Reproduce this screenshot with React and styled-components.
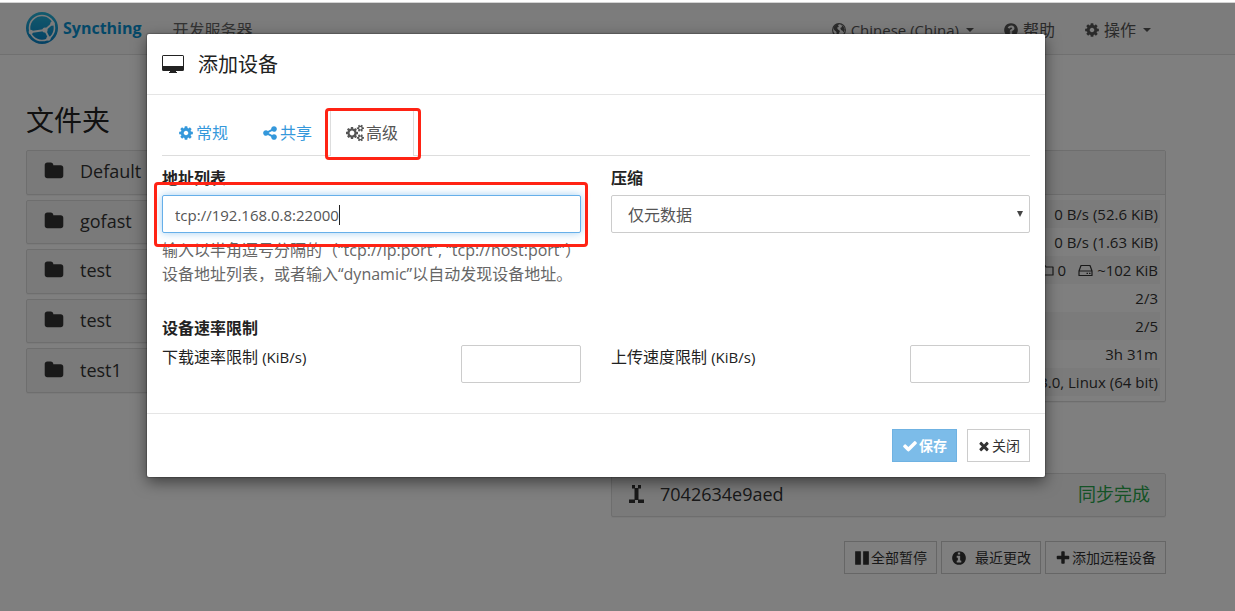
import React, { useState } from 'react';
import styled, { createGlobalStyle, css } from 'styled-components';

const GlobalStyle = createGlobalStyle`
  *, *::before, *::after {
    box-sizing: border-box;
  }

  body {
    margin: 0;
    background: #fff;
    color: #333;
    font-family: "Open Sans", "Noto Sans CJK SC", sans-serif;
    font-size: 15px;
    line-height: 24px;
    overflow-x: hidden;
  }

  button, input, select {
    font: inherit;
  }
`

const PATHS = {
  cog: 'M1152 896q0-106-75-181t-181-75-181 75-75 181 75 181 181 75 181-75 75-181zm512-109v222q0 12-8 23t-20 13l-185 28q-19 54-39 91 35 50 107 138 10 12 10 25t-9 23q-27 37-99 108t-94 71q-12 0-26-9l-138-108q-44 23-91 38-16 136-29 186-7 28-36 28h-222q-14 0-24.5-8.5t-11.5-21.5l-28-184q-49-16-90-37l-141 107q-10 9-25 9-14 0-25-11-126-114-165-168-7-10-7-23 0-12 8-23 15-21 51-66.5t54-70.5q-27-50-41-99l-183-27q-13-2-21-12.5t-8-23.5v-222q0-12 8-23t19-13l186-28q14-46 39-92-40-57-107-138-10-12-10-24 0-10 9-23 26-36 98.5-107.5t94.5-71.5q13 0 26 10l138 107q44-23 91-38 16-136 29-186 7-28 36-28h222q14 0 24.5 8.5t11.5 21.5l28 184q49 16 90 37l142-107q9-9 24-9 13 0 25 10 129 119 165 170 7 8 7 22 0 12-8 23-15 21-51 66.5t-54 70.5q26 50 41 98l183 28q13 2 21 12.5t8 23.5z',
  share: 'M1344 1024q133 0 226.500 93.500t93.500 226.500-93.500 226.500-226.500 93.500-226.500-93.500-93.500-226.500q0-12 2-34l-360-180q-92 86-218 86-133 0-226.500-93.500t-93.500-226.500 93.500-226.500 226.500-93.500q126 0 218 86l360-180q-2-22-2-34 0-133 93.500-226.500t226.500-93.500 226.500 93.500 93.500 226.500-93.500 226.500-226.500 93.500q-126 0-218-86l-360 180q2 22 2 34t-2 34l360 180q92-86 218-86z',
  cogs: 'M896 896q0-106-75-181t-181-75-181 75-75 181 75 181 181 75 181-75 75-181zm768 512q0-52-38-90t-90-38-90 38-38 90q0 53 37.500 90.500t90.500 37.500 90.500-37.500 37.500-90.500zm0-1024q0-52-38-90t-90-38-90 38-38 90q0 53 37.500 90.500t90.500 37.500 90.500-37.500 37.500-90.500zm-384 421v185q0 10-7 19.500t-16 10.500l-155 24q-11 35-32 76 34 48 90 115 7 11 7 20 0 12-7 19-23 30-82.500 89.500t-78.500 59.500q-11 0-21-7l-115-90q-37 19-77 31-11 108-23 155-7 24-30 24h-186q-11 0-20-7.500t-10-17.500l-23-153q-34-10-75-31l-118 89q-7 7-20 7-11 0-21-8-144-133-144-160 0-9 7-19 10-14 41-53t47-61q-23-44-35-82l-152-24q-10-1-17-9.500t-7-19.500v-185q0-10 7-19.500t16-10.500l155-24q11-35 32-76-34-48-90-115-7-11-7-20 0-12 7-20 22-30 82-89t79-59q11 0 21 7l115 90q34-18 77-32 11-108 23-154 7-24 30-24h186q11 0 20 7.500t10 17.500l23 153q34 10 75 31l118-89q8-7 20-7 11 0 21 8 144 133 144 160 0 8-7 19-12 16-42 54t-45 60q23 48 34 82l152 23q10 2 17 10.500t7 19.500zm640 533v140q0 16-149 31-12 27-30 52 51 113 51 138 0 4-4 7-122 71-124 71-8 0-46-47t-52-68q-20 2-30 2t-30-2q-14 21-52 68t-46 47q-2 0-124-71-4-3-4-7 0-25 51-138-18-25-30-52-149-15-149-31v-140q0-16 149-31 13-29 30-52-51-113-51-138 0-4 4-7 4-2 35-20t59-34 30-16q8 0 46 46.500t52 67.500q20-2 30-2t30 2q51-71 92-112l6-2q4 0 124 70 4 3 4 7 0 25-51 138 17 23 30 52 149 15 149 31zm0-1024v140q0 16-149 31-12 27-30 52 51 113 51 138 0 4-4 7-122 71-124 71-8 0-46-47t-52-68q-20 2-30 2t-30-2q-14 21-52 68t-46 47q-2 0-124-71-4-3-4-7 0-25 51-138-18-25-30-52-149-15-149-31v-140q0-16 149-31 13-29 30-52-51-113-51-138 0-4 4-7 4-2 35-20t59-34 30-16q8 0 46 46.500t52 67.500q20-2 30-2t30 2q51-71 92-112l6-2q4 0 124 70 4 3 4 7 0 25-51 138 17 23 30 52 149 15 149 31z',
  check: 'M1671 566q0 40-28 68l-724 724-136 136q-28 28-68 28t-68-28l-136-136-362-362q-28-28-28-68t28-68l136-136q28-28 68-28t68 28l294 295 656-657q28-28 68-28t68 28l136 136q28 28 28 68z',
  times: 'M1490 1322q0 40-28 68l-136 136q-28 28-68 28t-68-28l-294-294-294 294q-28 28-68 28t-68-28l-136-136q-28-28-28-68t28-68l294-294-294-294q-28-28-28-68t28-68l136-136q28-28 68-28t68 28l294 294 294-294q28-28 68-28t68 28l136 136q28 28 28 68t-28 68l-294 294 294 294q28 28 28 68z',
  plus: 'M1600 736v192q0 40-28 68t-68 28h-416v416q0 40-28 68t-68 28h-192q-40 0-68-28t-28-68v-416h-416q-40 0-68-28t-28-68v-192q0-40 28-68t68-28h416v-416q0-40 28-68t68-28h192q40 0 68 28t28 68v416h416q40 0 68 28t28 68z',
  folder: 'M1728 608v704q0 92-66 158t-158 66h-1216q-92 0-158-66t-66-158v-960q0-92 66-158t158-66h320q92 0 158 66t66 158v32h672q92 0 158 66t66 158z',
  pause: 'M1664 192v1408q0 26-19 45t-45 19h-512q-26 0-45-19t-19-45v-1408q0-26 19-45t45-19h512q26 0 45 19t19 45zm-896 0v1408q0 26-19 45t-45 19h-512q-26 0-45-19t-19-45v-1408q0-26 19-45t45-19h512q26 0 45 19t19 45z',
  info: 'M1152 1376v-160q0-14-9-23t-23-9h-96v-512q0-14-9-23t-23-9h-320q-14 0-23 9t-9 23v160q0 14 9 23t23 9h96v320h-96q-14 0-23 9t-9 23v160q0 14 9 23t23 9h448q14 0 23-9t9-23zm-128-896v-160q0-14-9-23t-23-9h-192q-14 0-23 9t-9 23v160q0 14 9 23t23 9h192q14 0 23-9t9-23zm640 416q0 209-103 385.500t-279.500 279.500-385.500 103-385.500-103-279.500-279.500-103-385.500 103-385.500 279.500-279.500 385.500-103 385.500 103 279.500 279.500 103 385.500z',
  question: 'M1024 1376v-192q0-14-9-23t-23-9h-192q-14 0-23 9t-9 23v192q0 14 9 23t23 9h192q14 0 23-9t9-23zm256-672q0-88-55.500-163t-138.500-116-170-41q-243 0-371 213-15 24 8 42l132 100q7 6 19 6 16 0 25-12 53-68 86-92 34-24 86-24 48 0 85.500 26t37.500 59q0 38-20 61t-68 45q-63 28-115.500 86.500t-52.500 125.500v36q0 14 9 23t23 9h192q14 0 23-9t9-23q0-19 21.500-49.500t54.500-49.500q32-18 49-28.500t46-35 44.500-48 28-60.500 12.500-81zm384 192q0 209-103 385.500t-279.500 279.500-385.500 103-385.500-103-279.500-279.500-103-385.500 103-385.500 279.500-279.500 385.500-103 385.500 103 279.500 279.500 103 385.500z',
}

const Svg = styled.svg`
  flex: none;
  fill: currentColor;
`

const Icon = ({ name, size = 16 }) => (
  <Svg width={size} height={size} viewBox={name === 'cogs' ? '0 -64 1920 1920' : '0 0 1792 1792'} aria-hidden="true">
    <path d={PATHS[name]} />
  </Svg>
)

const Globe = () => (
  <Svg width="16" height="16" viewBox="0 0 16 16" aria-hidden="true">
    <circle cx="8" cy="8" r="6.4" fill="none" stroke="currentColor" strokeWidth="1.1" />
    <path d="M2.500 5L5.500 2l2.500.3L7 3.700l1 1-2 1L7 7.500l2 1.500-1 2-1 2.800-1.500-1.600V10L3.500 8.300 2.500 7zM10.500 3l2 1.500 1.300 3-1 3-1.300-1.800-1.500-.7-.7-2 1.700-1z" />
  </Svg>
)

const Desktop = () => (
  <Svg width="22" height="18" viewBox="0 0 22 18" aria-hidden="true">
    <path fillRule="evenodd" d="M1.500 0h19A1.500 1.500 0 0 1 22 1.500v13a1.500 1.500 0 0 1-1.500 1.500H14v1h1v1H7v-1h1v-1H1.500A1.500 1.500 0 0 1 0 14.500v-13A1.500 1.500 0 0 1 1.500 0zM1 1v10h20V1z" />
  </Svg>
)

const Drive = () => (
  <Svg width="15" height="14" viewBox="0 0 15 14" aria-hidden="true">
    <path d="M1 8l2-5.500h9L14 8v4.500H1zM1 8h13" fill="none" stroke="currentColor" strokeWidth="1.200" strokeLinejoin="round" />
    <path d="M8.500 9.700H10V11H8.500zM11 9.700h1.500V11H11z" />
  </Svg>
)

const FolderOutline = () => (
  <Svg width="14" height="14" viewBox="0 0 14 14" aria-hidden="true">
    <path d="M1 2.500h4l1 1.500h7v8H1z" fill="none" stroke="currentColor" strokeWidth="1.200" strokeLinejoin="round" />
  </Svg>
)

const Identicon = () => (
  <Svg width="15" height="18" viewBox="0 0 15 18" aria-hidden="true">
    <path d="M3 0h3v3.600H3zM9 0h3v3.600H9zM5.500 3h4v12h-4zM0 14.400h6V18H0zM9 14.400h6V18H9z" />
  </Svg>
)

const Logo = () => (
  <Svg width="32" height="32" viewBox="0 0 32 32" aria-hidden="true">
    <defs>
      <linearGradient id="logo" x1="0" y1="0" x2="0" y2="1">
        <stop offset="0" stopColor="#26b6db" />
        <stop offset="1" stopColor="#0882c8" />
      </linearGradient>
    </defs>
    <circle cx="16" cy="16" r="16" fill="url(#logo)" />
    <g fill="none" stroke="#f8f8f8">
      <circle cx="16" cy="16" r="12.500" strokeWidth="1.600" />
      <path d="M19 18L27 11M19 18L5 20M19 18L23 26" strokeWidth="1.800" />
    </g>
    <g fill="#f8f8f8">
      <circle cx="19" cy="18" r="2.600" />
      <circle cx="26.500" cy="11.500" r="2.200" />
      <circle cx="4.800" cy="20" r="2.200" />
      <circle cx="22.500" cy="26.500" r="2.200" />
    </g>
  </Svg>
)

const Page = styled.div`
  position: relative;
  min-height: 100vh;
  border-top: 2px solid #fff;
`

const Navbar = styled.nav`
  height: 53px;
  padding-right: 43px;
  background: #f8f8f8;
  border-top: 1px solid #d4d4d4;
  border-bottom: 1px solid #e0e0e0;
`

const Container = styled.div`
  max-width: 1170px;
  margin: 0 auto;
  padding: 0 15px;
`

const NavRow = styled(Container)`
  display: flex;
  align-items: center;
  height: 50px;
`

const Brand = styled.a`
  display: flex;
  align-items: center;
  gap: 5px;
  margin-right: 31px;
  color: #0891d1;
  font-size: 16px;
  font-weight: 700;
  text-decoration: none;
`

const ServerName = styled.span`
  flex: 1;
  padding-top: 3px;
  color: #666;
  font-size: 16px;
`

const NavMenu = styled.div`
  display: flex;
  gap: 29px;
  padding: 3px 15px 0 0;
`

const NavLink = styled.a`
  display: flex;
  align-items: center;
  gap: 4px;
  color: #555;
  font-size: 16px;
  text-decoration: none;
`

const Caret = styled.span`
  margin-left: 3px;
  border: 4px solid transparent;
  border-top-color: currentColor;
  border-bottom: 0;
`

const Main = styled.main`
  padding-right: 43px;
`

const Columns = styled(Container)`
  display: grid;
  grid-template-columns: 1fr 1fr;
  gap: 30px;
  padding-top: 95px;
`

const FolderColumn = styled.section`
  margin-top: -50px;
`

const Heading = styled.h3`
  margin: 0 0 10px;
  color: #222;
  font-size: 28px;
  font-weight: 400;
  line-height: 40px;
`

const PanelList = styled.div`
  display: grid;
  grid-auto-rows: 1fr;
  gap: 5px;
  min-height: 243px;
`

const panel = css`
  background: #f5f5f5;
  border: 1px solid #ddd;
  border-radius: 2px;
  box-shadow: 0 1px 1px rgba(0, 0, 0, .05);
`

const PanelButton = styled.button`
  ${panel}
  display: flex;
  align-items: center;
  gap: 16px;
  width: 100%;
  min-height: 44px;
  padding: 0 15px 2px 17px;
  color: #333;
  font-size: 18px;
  text-align: left;
`

const Status = styled.span`
  margin-left: auto;
  color: #29a64c;
`

const Device = styled.section`
  ${panel}
  margin-bottom: 71px;
  background: #fff;
`

const DeviceHead = styled.div`
  height: 44px;
  background: #f5f5f5;
  border-bottom: 1px solid #ddd;
`

const Stats = styled.table`
  width: calc(100% - 10px);
  margin: 5px;
  border-collapse: collapse;

  tr:nth-child(odd) {
    background: #f7f7f7;
  }

  td {
    height: 28px;
    padding: 0 2px;
    font-size: 15px;
    text-align: right;
  }
`

const Inline = styled.span`
  display: inline-flex;
  align-items: center;
  gap: 4px;
  vertical-align: top;

  & + & {
    margin-left: 12px;
  }
`

const ButtonRow = styled.div`
  display: flex;
  justify-content: flex-end;
  gap: 4px;
  margin-top: 24px;
`

const Button = styled.button`
  display: inline-flex;
  align-items: center;
  gap: ${props => props.$wide ? 8 : 1}px;
  height: 33px;
  padding: 0 9px;
  background: ${props => props.$primary ? '#7cbce9' : '#fff'};
  border: 1px solid ${props => props.$primary ? '#6fb2e2' : '#ccc'};
  color: ${props => props.$primary ? '#fff' : '#333'};
  font-size: 14px;
  font-weight: ${props => props.$primary ? 700 : 400};
  white-space: nowrap;
`

const Backdrop = styled.div`
  position: absolute;
  inset: 1px 0 0;
  padding: 31px 43px 0 0;
  background: rgba(0, 0, 0, .5);
`

const Dialog = styled.div`
  max-width: 898px;
  margin: 0 auto;
  background: #fff;
  border-radius: 2px;
  box-shadow: 0 5px 15px rgba(0, 0, 0, .5), 0 0 1px 1px rgba(0, 0, 0, .2);
`

const DialogHeader = styled.header`
  display: flex;
  align-items: center;
  gap: 14px;
  height: 61px;
  padding: 0 15px;
  border-bottom: 1px solid #e5e5e5;
  color: #222;
`

const Title = styled.h4`
  margin: 0;
  padding-top: 2px;
  font-size: 20px;
  font-weight: 400;
`

const DialogBody = styled.div`
  padding: 15px;
`

const Tabs = styled.div`
  display: flex;
  height: 46px;
  border-bottom: 1px solid #ddd;
`

const Tab = styled.button`
  position: relative;
  display: flex;
  align-items: center;
  gap: 2px;
  height: 46px;
  margin-right: 2px;
  padding: 0 15px 2px;
  background: ${props => props.$active ? '#fff' : 'transparent'};
  border: 1px solid ${props => props.$active ? '#ddd' : 'transparent'};
  border-bottom: 0;
  color: ${props => props.$active ? '#555' : '#3498db'};
  font-size: 16px;
`

const Mark = styled.span`
  position: absolute;
  inset: ${props => props.$inset};
  border: 3px solid #ff2314;
  border-radius: 4px;
  pointer-events: none;
`

const Fields = styled.div`
  display: grid;
  grid-template-columns: 1fr 1fr;
  gap: 30px;
`

const Label = styled.label`
  display: block;
  padding: 10px 0 5px;
  color: #222;
  font-size: 16px;
  font-weight: 700;
`

const Field = styled.div`
  position: relative;
`

const control = css`
  width: 100%;
  height: 38px;
  background: #fff;
  border: 1px solid #ccc;
  border-radius: 2px;
  color: #555;
  outline: 0;
`

const Input = styled.input`
  ${control}
  padding: 2px 12px 0;

  ${props => props.$focused && css`
    border-color: #66afe9;
    box-shadow: 0 0 8px rgba(102, 175, 233, .6);
  `}
`

const TextCursor = styled.span`
  position: absolute;
  top: 10px;
  left: 177px;
  width: 1px;
  height: 20px;
  background: #222;
`

const Select = styled.select`
  ${control}
  padding: 2px 16px 0;
  font-size: 16px;
  appearance: none;
`

const SelectArrow = styled.span`
  position: absolute;
  top: 16px;
  right: 7px;
  border: 3px solid transparent;
  border-top: 6px solid #444;
  border-bottom: 0;
  pointer-events: none;
`

const Help = styled.p`
  margin: 5px 0 0;
  color: #666;
  font-size: 16px;
`

const Latin = styled.span`
  font-size: 15px;
`

const RateTitle = styled.h5`
  margin: 30px 0 0;
  color: #222;
  font-size: 16px;
  line-height: 24px;
`

const RateRow = styled.div`
  display: flex;
  justify-content: space-between;
  padding-top: 5px;
`

const RateLabel = styled.label`
  color: #222;
  font-size: 16px;
`

const RateBox = styled.div`
  width: 120px;
`

const DialogFooter = styled.footer`
  display: flex;
  justify-content: flex-end;
  gap: 10px;
  padding: 15px;
  margin-top: 15px;
  border-top: 1px solid #e5e5e5;
`

const folders = ['Default', 'gofast', 'test', 'test', 'test1'];

const stats = [
  '0 B/s (52.6 KiB)',
  '0 B/s (1.63 KiB)',
  <>
    <Inline><FolderOutline />0</Inline>
    <Inline><Drive />~102 KiB</Inline>
  </>,
  '2/3',
  '2/5',
  '3h 31m',
  'v1.3.0, Linux (64 bit)',
];

const tabs = [
  { icon: 'cog', label: '常规' },
  { icon: 'share', label: '共享' },
  { icon: 'cogs', label: '高级' },
];

function AddDevice() {
  const [address, setAddress] = useState('tcp://192.168.0.8:22000');
  const [active, setActive] = useState(2);

  return (
    <Dialog role="dialog" aria-labelledby="title">
      <DialogHeader>
        <Desktop />
        <Title id="title">添加设备</Title>
      </DialogHeader>
      <DialogBody>
        <Tabs role="tablist">
          {tabs.map((tab, i) => (
            <Tab key={tab.label} role="tab" aria-selected={i === active} $active={i === active} onClick={() => setActive(i)}>
              <Icon name={tab.icon} size={tab.icon === 'cogs' ? 18 : 16} />
              {tab.label}
              {i === 2 && <Mark $inset="-3px -8px -4px -6px" />}
            </Tab>
          ))}
        </Tabs>
        <Fields>
          <div>
            <Label htmlFor="addresses">地址列表</Label>
            <Field>
              <Input id="addresses" $focused value={address} onChange={e => setAddress(e.target.value)} />
              <TextCursor />
              <Mark $inset="-13px -7px -14px -8px" />
            </Field>
            <Help>
              输入以半角逗号分隔的（“tcp://ip:port”, “tcp://host:port”）设备地址列表，或者输入“dynamic”以自动发现设备地址。
            </Help>
          </div>
          <div>
            <Label htmlFor="compression">压缩</Label>
            <Field>
              <Select id="compression">
                <option>仅元数据</option>
              </Select>
              <SelectArrow />
            </Field>
          </div>
        </Fields>
        <RateTitle>设备速率限制</RateTitle>
        <Fields>
          <RateRow>
            <RateLabel htmlFor="download">下载速率限制 <Latin>(KiB/s)</Latin></RateLabel>
            <RateBox><Input id="download" /></RateBox>
          </RateRow>
          <RateRow>
            <RateLabel htmlFor="upload">上传速度限制 <Latin>(KiB/s)</Latin></RateLabel>
            <RateBox><Input id="upload" /></RateBox>
          </RateRow>
        </Fields>
      </DialogBody>
      <DialogFooter>
        <Button $primary><Icon name="check" />保存</Button>
        <Button><Icon name="times" size={14} />关闭</Button>
      </DialogFooter>
    </Dialog>
  )
}

export default function App() {
  return (
    <>
      <GlobalStyle />
      <Page>
        <Navbar>
          <NavRow>
            <Brand href="#"><Logo />Syncthing</Brand>
            <ServerName>开发服务器</ServerName>
            <NavMenu>
              <NavLink href="#"><Globe /><Latin>Chinese (China)</Latin><Caret /></NavLink>
              <NavLink href="#"><Icon name="question" />帮助</NavLink>
              <NavLink href="#"><Icon name="cog" />操作<Caret /></NavLink>
            </NavMenu>
          </NavRow>
        </Navbar>
        <Main>
          <Columns>
            <FolderColumn>
              <Heading>文件夹</Heading>
              <PanelList>
                {folders.map((name, i) => (
                  <PanelButton key={i}><Icon name="folder" size={20} />{name}</PanelButton>
                ))}
              </PanelList>
            </FolderColumn>
            <section>
              <Device>
                <DeviceHead />
                <Stats>
                  <tbody>
                    {stats.map((value, i) => <tr key={i}><td>{value}</td></tr>)}
                  </tbody>
                </Stats>
              </Device>
              <PanelButton>
                <Identicon />7042634e9aed<Status>同步完成</Status>
              </PanelButton>
              <ButtonRow>
                <Button><Icon name="pause" />全部暂停</Button>
                <Button $wide><Icon name="info" />最近更改</Button>
                <Button><Icon name="plus" />添加远程设备</Button>
              </ButtonRow>
            </section>
          </Columns>
        </Main>
        <Backdrop>
          <AddDevice />
        </Backdrop>
      </Page>
    </>
  )
}
